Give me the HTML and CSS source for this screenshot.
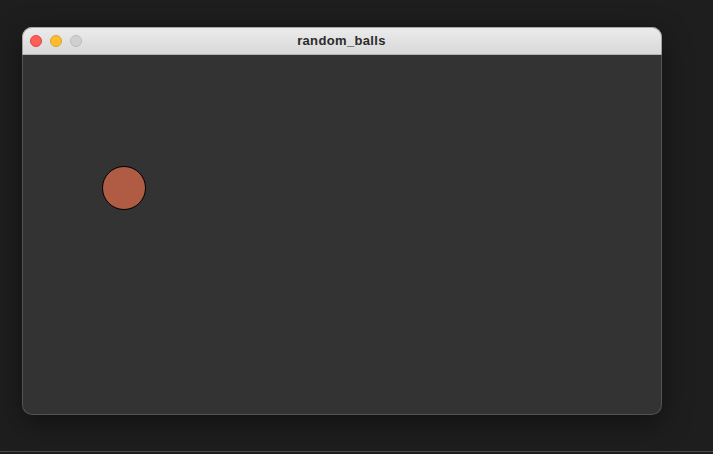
FILE: index.html
```html
<!DOCTYPE html>
<html>
<head>
<meta charset="utf-8">
<link rel="stylesheet" href="styles.css">
</head>
<body>
<div class="desktop">
  <div class="window">
    <div class="titlebar">
      <div class="lights">
        <span class="light close"></span>
        <span class="light minimize"></span>
        <span class="light zoom"></span>
      </div>
      <div class="title">random_balls</div>
    </div>
    <div class="canvas">
      <div class="ball" style="left:80px;top:111px;"></div>
    </div>
  </div>
</div>
</body>
</html>
```
FILE: styles.css
```css
html, body {
  margin: 0;
  padding: 0;
  background: #1e1e1e;
}
body {
  width: 713px;
  height: 454px;
  overflow: hidden;
}
.desktop {
  height: 452px;
  box-sizing: border-box;
  padding: 27px 0 0 22px;
  border-bottom: 1px solid #4a4a4a;
}
.window {
  position: relative;
  width: 640px;
  border-radius: 10px;
  overflow: hidden;
  box-shadow: 0 8px 30px rgba(0,0,0,0.45);
  background: #333333;
}
.window::after {
  content: "";
  position: absolute;
  inset: 0;
  border-radius: 10px;
  box-shadow: inset 0 0 0 1px rgba(110,110,110,0.55);
  pointer-events: none;
}
.titlebar {
  position: relative;
  height: 27px;
  background: linear-gradient(#ececec, #d8d8d8);
  border-bottom: 1px solid #b4b4b4;
  display: flex;
  align-items: center;
  justify-content: center;
}
.lights {
  position: absolute;
  left: 8px;
  top: 8px;
  display: flex;
  gap: 8px;
}
.light {
  width: 12px;
  height: 12px;
  border-radius: 50%;
  box-sizing: border-box;
}
.close { background: #fe5f57; border: 1px solid #e0443e; }
.minimize { background: #febc2e; border: 1px solid #dea123; }
.zoom { background: #d0d0d0; border: 1px solid #bcbcbc; }
.title {
  font-family: "Liberation Sans", Arial, sans-serif;
  font-weight: bold;
  font-size: 13px;
  letter-spacing: 0.35px;
  color: #2b2b2b;
  margin-left: -1px;
}
.canvas {
  position: relative;
  height: 360px;
  background: #333333;
}
.ball {
  position: absolute;
  width: 44px;
  height: 44px;
  box-sizing: border-box;
  border-radius: 50%;
  background: #b05b43;
  border: 1px solid #000;
}
```
